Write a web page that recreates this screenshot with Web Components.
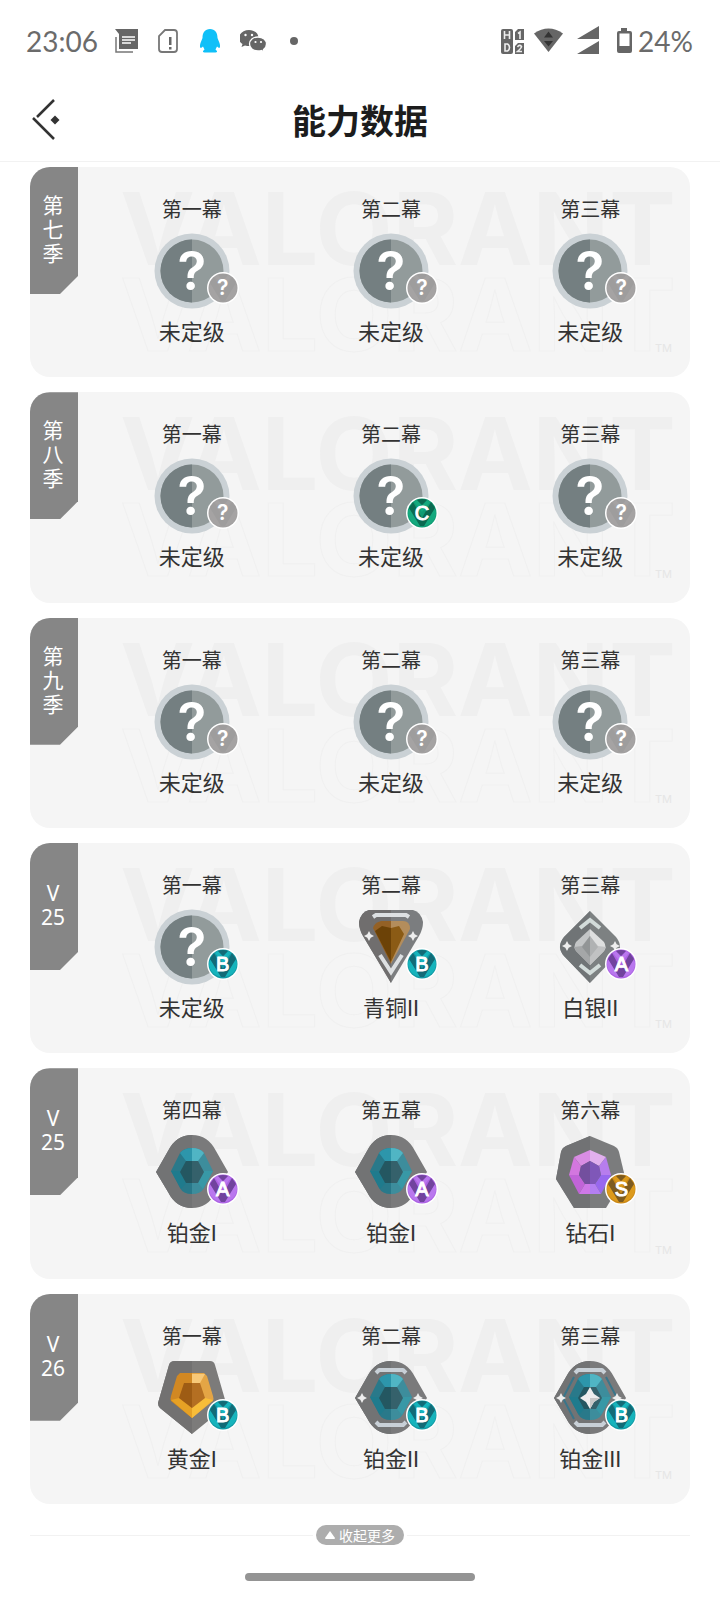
<!DOCTYPE html>
<html lang="zh-CN">
<head>
<meta charset="utf-8">
<meta name="viewport" content="width=device-width, initial-scale=1">
<title>能力数据</title>
<style>
  body { margin: 0; display: flex; flex-direction: column; min-height: 100vh; background: #fff; color: #333; font-family: Roboto, "Noto Sans CJK SC", sans-serif; }
  main { flex: 1; display: grid; grid-auto-rows: 1fr; gap: 15px; padding: 5px 30px 0; }
</style>
</head>
<body>
<status-bar time="23:06" battery="24%"></status-bar>
<page-header>能力数据</page-header>
<main>
  <season-card>
    <span slot="season">第<br>七<br>季</span>
    <act-rank act="第一幕" rank="unranked" grade="?">未定级</act-rank>
    <act-rank act="第二幕" rank="unranked" grade="?">未定级</act-rank>
    <act-rank act="第三幕" rank="unranked" grade="?">未定级</act-rank>
  </season-card>
  <season-card>
    <span slot="season">第<br>八<br>季</span>
    <act-rank act="第一幕" rank="unranked" grade="?">未定级</act-rank>
    <act-rank act="第二幕" rank="unranked" grade="C">未定级</act-rank>
    <act-rank act="第三幕" rank="unranked" grade="?">未定级</act-rank>
  </season-card>
  <season-card>
    <span slot="season">第<br>九<br>季</span>
    <act-rank act="第一幕" rank="unranked" grade="?">未定级</act-rank>
    <act-rank act="第二幕" rank="unranked" grade="?">未定级</act-rank>
    <act-rank act="第三幕" rank="unranked" grade="?">未定级</act-rank>
  </season-card>
  <season-card>
    <span slot="season">V<br>25</span>
    <act-rank act="第一幕" rank="unranked" grade="B">未定级</act-rank>
    <act-rank act="第二幕" rank="bronze2" grade="B">青铜II</act-rank>
    <act-rank act="第三幕" rank="silver2" grade="A">白银II</act-rank>
  </season-card>
  <season-card>
    <span slot="season">V<br>25</span>
    <act-rank act="第四幕" rank="platinum1" grade="A">铂金I</act-rank>
    <act-rank act="第五幕" rank="platinum1" grade="A">铂金I</act-rank>
    <act-rank act="第六幕" rank="diamond1" grade="S">钻石I</act-rank>
  </season-card>
  <season-card>
    <span slot="season">V<br>26</span>
    <act-rank act="第一幕" rank="gold1" grade="B">黄金I</act-rank>
    <act-rank act="第二幕" rank="platinum2" grade="B">铂金II</act-rank>
    <act-rank act="第三幕" rank="platinum3" grade="B">铂金III</act-rank>
  </season-card>
</main>
<collapse-toggle>收起更多</collapse-toggle>
<home-indicator></home-indicator>

<script>
class BaseElement extends HTMLElement {
  connectedCallback() {
    if (!this.shadowRoot) this.attachShadow({ mode: "open" }).innerHTML = this.render();
  }
}

customElements.define("status-bar", class extends BaseElement {
  render() {
    return `<style>
      :host { display: flex; justify-content: space-between; align-items: center; height: 82px; padding: 0 27px 0 26px; color: #6b6b6b; font: 28px/34px Lato, sans-serif; }
      .side { display: flex; align-items: center; gap: 16px; }
      .right { gap: 8px; }
      .battery { display: flex; align-items: center; }
      svg { display: block; fill: #666; }
    </style>
    <div class="side">
      <span>${this.getAttribute("time")}</span>
      <svg width="26" height="26" viewBox="0 0 26 26"><path d="M1 1H24V21H5V6Z"/><path d="M8 9H21M8 12H21M8 15H17" stroke="#fff" stroke-width="1.3"/><path d="M2 9V24H19" fill="none" stroke="#777" stroke-width="1.5"/></svg>
      <svg width="24" height="26" viewBox="0 0 24 26"><path d="M9 2H18Q21 2 21 5V21Q21 24 18 24H6Q3 24 3 21V8Z" fill="none" stroke="#777" stroke-width="1.8"/><path d="M13 9H15.500V17H13ZM13 19H15.500V21.500H13Z"/></svg>
      <svg width="28" height="26" viewBox="0 0 28 26"><path fill="#10c0f8" d="M14 1C9 1 6.500 4.500 6.500 10L4.500 15C3.500 18 4 20 5 20L7 18.500L8.500 21.500L7 23Q6.500 24.500 10 24.500H18Q21.500 24.500 21 23L19.500 21.500L21 18.500L23 20C24 20 24.500 18 23.500 15L21.500 10C21.500 4.500 19 1 14 1Z"/></svg>
      <svg width="28" height="26" viewBox="1 0 28 26"><path d="M10 2C4.500 2 0 5.500 0 10Q0 14 3.500 16L2.500 19L6 17.500Q8 18 10.500 18C16 18 19.500 14.500 19.500 10S15.500 2 10 2Z"/><path stroke="#fff" stroke-width="1.300" d="M19 9C14 9 10.500 12 10.500 16S14 23 19 23Q21 23 22.500 22.500L25.500 24L24.500 21.500Q27.500 19.500 27.500 16C27.500 12 24 9 19 9Z"/><g fill="#fff"><circle cx="6.500" cy="7" r="1.200"/><circle cx="13" cy="7" r="1.200"/><circle cx="16.500" cy="14" r="1.100"/><circle cx="22" cy="14" r="1.100"/></g></svg>
      <svg width="24" height="26" viewBox="0 0 24 26"><circle cx="10" cy="13" r="4"/></svg>
    </div>
    <div class="side right">
      <svg width="28" height="28" viewBox="0 0 28 28"><rect x="3" y="2" width="12" height="25" rx="2"/><path d="M20 2H26V13H17V5ZM20 16H26V27H17V19Z"/><path d="M6.500 4V12M11.500 4V12M6.500 8H11.500M7 17H9.500Q11.500 18 11.500 20.500T9.500 24H7ZM20 6.500L22 5V12M19.500 20Q21.500 17 23.500 19.500Q23.500 21 19.500 24.500H24" fill="none" stroke="#eee" stroke-width="1.600"/></svg>
      <svg width="32" height="28" viewBox="1 0 32 28"><path d="M1 6.500Q15.500-3.500 30 6.500L15.500 25Z"/><path fill="#333" d="M15.500 4.500L20 10.500H11ZM15.500 19.500L11 14H20Z"/></svg>
      <svg width="30" height="30" viewBox="1 1 30 30"><path d="M26 1V14H4ZM26 16V29H4Z"/></svg>
      <div class="battery">
        <svg width="26" height="28" viewBox="1 0 26 28"><path fill-rule="evenodd" d="M10 1H16V4H19Q21 4 21 6V24Q21 26 19 26H8Q6 26 6 24V6Q6 4 8 4H10ZM8.500 6.500V19H18.500V6.500Z"/></svg>
        <span>${this.getAttribute("battery")}</span>
      </div>
    </div>`;
  }
});

customElements.define("page-header", class extends BaseElement {
  render() {
    return `<style>
      :host { display: grid; grid-template-columns: 1fr auto 1fr; align-items: center; height: 79px; border-bottom: 1px solid #f2f2f2; }
      h1 { margin: 0; font-size: 34px; line-height: 48px; font-weight: 700; color: #1c1c1c; }
      button { justify-self: start; margin: 0 0 4px 30px; padding: 0; border: 0; background: none; }
      svg { display: block; }
    </style>
    <button type="button" aria-label="返回"><svg width="32" height="44" viewBox="0 0 32 44" fill="none" stroke="#333" stroke-width="2.500"><path d="M24 2L7 19M3 20L24 41"/><path fill="#333" stroke="none" d="M25 17.500L29.500 22L25 26.500L20.500 22Z"/></svg></button>
    <h1><slot></slot></h1>`;
  }
});

customElements.define("season-card", class extends BaseElement {
  render() {
    return `<style>
      :host { display: grid; grid-template-columns: 48px 1fr; position: relative; min-height: 210px; overflow: hidden; border-radius: 20px; background: #f5f5f5; }
      .tab { display: flex; align-items: center; justify-content: center; box-sizing: border-box; height: 127px; padding: 0 2px 3px 0; background: #868686; color: #fff; font: 21px/24px "Noto Sans", "Noto Sans CJK SC", sans-serif; text-align: center; clip-path: polygon(0 0, 100% 0, 100% 109px, 30px 100%, 0 100%); }
      .acts { display: grid; grid-template-columns: repeat(3, 1fr); padding-left: 14px; position: relative; }
      .mark { position: absolute; inset: 0; display: flex; flex-direction: column; align-items: center; justify-content: center; padding-left: 76px; color: #efefef; font: 700 100px/86px Inter, sans-serif; }
      .line { color: #f5f5f5; -webkit-text-stroke: 1px #f0f0f0; }
      .tm { position: absolute; right: 18px; bottom: 22px; font: 11px/14px Inter, sans-serif; color: #e6e6e6; }
    </style>
    <div class="mark" aria-hidden="true"><span>VALORANT</span><span class="line">VALORANT</span><span class="tm">TM</span></div>
    <div class="tab"><slot name="season"></slot></div>
    <div class="acts"><slot></slot></div>`;
  }
});

const sparkle = (x, y, r) => {
  const k = r / 3;
  return `<path fill="#eee" d="M${x} ${y - r}L${x + k} ${y - k}L${x + r} ${y}L${x + k} ${y + k}L${x} ${y + r}L${x - k} ${y + k}L${x - r} ${y}L${x - k} ${y - k}Z"/>`;
};
const platinumBase = `
  <path fill="#7a7a7b" d="M2 38L14 17Q22 1 38 1Q54 1 62 17L74 38L62 58Q54 74 38 74Q22 74 14 58Z"/>
  <path fill="#727374" d="M2 38L14 17Q22 1 38 1V74Q22 74 14 58Z"/>
  <path fill="#29798a" d="M17 37L26 19Q30 14 38 14V60Q29 60 26 54Z"/>
  <path fill="#3d8d9c" d="M59 37L50 19Q46 14 38 14V60Q47 60 50 54Z"/>
  <path fill="#2d96ab" d="M26 19Q30 14 38 14V27H32Z"/><path fill="#50b5c4" d="M38 14Q46 14 50 19L44 27H38Z"/>
  <path fill="#1f7b8d" d="M17 37H26L32 49L27 55Z"/><path fill="#3898a6" d="M59 37H50L44 49L49 55Z"/>
  <path fill="#245761" d="M38 27H32L26 38L32 49H38Z"/><path fill="#35616b" d="M38 27H44L50 38L44 49H38Z"/>`;
const bars = `<path fill="none" stroke="#c8d0d7" stroke-width="4" stroke-linejoin="round" d="M23 13L26 10H50L53 13M23 62L26 65H50L53 62"/>`;

const emblems = {
  unranked: `
    <circle cx="38" cy="38" r="37.500" fill="#cad1d5"/>
    <circle cx="38" cy="38" r="31.500" fill="#929b9b"/><path fill="#747f81" d="M38 6.500A31.500 31.500 0 0 0 38 69.500Z"/>
    <text x="38" y="57" text-anchor="middle" fill="#fff" font-family="Inter, sans-serif" font-weight="600" font-size="53">?</text>`,
  bronze2: `
    <path fill="#7b7d7f" d="M16 1H60Q68 3 70 13Q70 20 66 27L38 74L10 27Q6 20 6 13Q8 3 16 1Z"/>
    <path fill="#706e6e" d="M16 1H38V74L10 27Q6 20 6 13Q8 3 16 1Z"/>
    <path fill="#946126" d="M20 19Q21 14 28 12H38V55Z"/><path fill="#b38d5c" d="M38 12H50Q57 12 57 20L38 55Z"/>
    <path fill="#6c4207" d="M22 22L29 17L38 19V53Z"/><path fill="#8b5b15" d="M38 19L46 17L51 25L38 53Z"/>
    <path fill="none" stroke="#dde0e2" stroke-width="4" d="M20 8L23 6H53L56 8M27 46L38 63L49 46"/>
    ${sparkle(16, 27, 5)}${sparkle(60, 27, 5)}`,
  silver2: `
    <path fill="#7d8182" d="M38 2L64 28Q72 38 64 47L38 74L12 47Q4 38 12 28Z"/>
    <path fill="#707476" d="M38 2V74L12 47Q4 38 12 28Z"/>
    <path fill="#c3c5c6" d="M38 20L24 33Q21 38 24 42L38 56Z"/><path fill="#dedfdf" d="M38 20L52 33Q55 38 52 42L38 56Z"/>
    <path fill="#a5a7a8" d="M38 27L30 37L22 38L24 42L38 56Z"/><path fill="#c1c2c3" d="M38 27L46 37L54 38L52 42L38 56Z"/>
    <path fill="#929596" d="M30 38L38 27V48Z"/><path fill="#b0b2b3" d="M46 38L38 27V48Z"/>
    <path fill="none" stroke="#d3dcda" stroke-width="4" d="M28 19L38 11L48 19M28 56L38 64L48 56"/>
    ${sparkle(15, 37, 5)}${sparkle(63, 37, 5)}`,
  platinum1: platinumBase,
  platinum2: platinumBase + bars + sparkle(9, 38, 5) + sparkle(65, 38, 5),
  platinum3: `${platinumBase}${bars}<path fill="none" stroke="#39758a" stroke-width="2" d="M22 17L11 38L22 59M54 17L65 38L54 59"/>${sparkle(9, 38, 5)}${sparkle(65, 38, 5)}
    <path fill="#eee" d="M38 27L42 34L48 38L42 42L38 49L34 42L28 38L34 34Z"/><path fill="#c9c9c9" d="M38 38L48 38L42 42L38 49Z"/>`,
  diamond1: `
    <path fill="#7b7c7d" d="M38 2L62 12Q66 14 67 18L73 43L54 74H22L4 45L9 18Q10 14 14 12Z"/>
    <path fill="#717274" d="M38 2V74H22L4 45L9 18Q10 14 14 12Z"/>
    <path fill="#d98de4" d="M38 16L22 23L29 32L38 27Z"/><path fill="#e2b0ee" d="M38 16L54 23L47 32L38 27Z"/>
    <path fill="#d377df" d="M22 23L17 41H27L29 32Z"/><path fill="#b77ded" d="M54 23L59 41H49L47 32Z"/>
    <path fill="#c164d8" d="M17 41L27 60L33 50L27 41Z"/><path fill="#9868ee" d="M59 41L49 60L43 50L49 41Z"/>
    <path fill="#ce78e7" d="M27 60H38V50H33Z"/><path fill="#b47ff2" d="M49 60H38V50H43Z"/>
    <path fill="#734f9e" d="M38 27L29 32L27 41L33 50H38Z"/><path fill="#7f57b8" d="M38 27L47 32L49 41L43 50H38Z"/>`,
  gold1: `
    <path fill="#7c7b7a" d="M21 1H56Q60 1 61 5L72 43Q72 46 70 48L38 74L6 48Q4 46 4 43L15 5Q16 1 21 1Z"/>
    <path fill="#727171" d="M38 1V74L6 48Q4 46 4 43L15 5Q16 1 21 1Z"/>
    <path fill="#d18823" d="M26 13H38V58L17 41Q16 39 17 36L23 16Z"/><path fill="#e4a545" d="M50 13H38V58L59 41Q60 39 59 36L53 16Z"/>
    <path fill="#f7c878" d="M38 14H51L46 23H38Z"/><path fill="#e6a125" d="M17 40L25 38L38 48V58Z"/><path fill="#f7bd39" d="M59 40L51 38L38 48V58Z"/>
    <path fill="#9e5c14" d="M38 23H30L25 38L38 48Z"/><path fill="#b46f22" d="M38 23H46L51 38L38 48Z"/>`
};

const gradeColors = {
  "?": ["#a2a0a0", "#a5a3a3", "#9e9d9d"],
  A: ["#ad63e4", "#b977ee", "#71439e"],
  B: ["#1298a3", "#16b4bc", "#126b77"],
  C: ["#109b73", "#14a97e", "#0a6950"],
  S: ["#cb8917", "#dc9a1c", "#7d5b20"]
};

customElements.define("rank-emblem", class extends BaseElement {
  render() {
    return `<style>:host { display: block; width: 76px; height: 76px; } svg { display: block; }</style>
      <svg width="76" height="76" viewBox="0 0 76 76">${emblems[this.getAttribute("rank")]}</svg>`;
  }
});

customElements.define("grade-badge", class extends BaseElement {
  render() {
    const grade = this.getAttribute("grade");
    const [base, light, dark] = gradeColors[grade];
    const font = grade === "?" ? "600 21px/32px Inter" : '20px/32px "Liberation Sans"';
    return `<style>
      :host { display: grid; place-items: center; width: 32px; height: 32px; color: #fff; }
      svg, span { grid-area: 1 / 1; }
      svg { display: block; }
      span { position: relative; font: ${font}, sans-serif; -webkit-text-stroke: ${grade === "?" ? 0 : 1}px #fff; }
    </style>
    <svg width="32" height="32" viewBox="0 0 32 32" aria-hidden="true">
      <circle cx="16" cy="16" r="16" fill="#fff"/><circle cx="16" cy="16" r="14.500" fill="${base}"/>
      <path fill="${light}" d="M3 12L8 14L14 29Q2 26 2 15ZM29 12L24 14L18 29Q30 26 30 15ZM8 5L16 15L24 5L21 3L16 9L11 3Z"/>
      <path fill="${dark}" d="M3 11L7 5L16 21L25 5L29 11L18 29H14ZM11 3L16 8L21 3Q16 1 11 3Z"/>
    </svg><span>${grade}</span>`;
  }
});

customElements.define("act-rank", class extends BaseElement {
  render() {
    return `<style>
      :host { display: flex; flex-direction: column; align-items: center; padding-top: 29px; }
      .act { font-size: 20px; line-height: 28px; }
      .icon { position: relative; margin: 9px 0 8px; }
      grade-badge { position: absolute; left: 53px; top: 39px; }
      .name { font-size: 22px; line-height: 32px; }
    </style>
    <div class="act">${this.getAttribute("act")}</div>
    <div class="icon"><rank-emblem rank="${this.getAttribute("rank")}"></rank-emblem><grade-badge grade="${this.getAttribute("grade")}"></grade-badge></div>
    <div class="name"><slot></slot></div>`;
  }
});

customElements.define("collapse-toggle", class extends BaseElement {
  render() {
    return `<style>
      :host { display: flex; align-items: center; gap: 3px; padding: 21px 30px 0; }
      :host::before, :host::after { content: ""; flex: 1; height: 1px; background: #f2f2f2; }
      button { display: flex; align-items: center; justify-content: center; gap: 4px; width: 88px; height: 20px; padding: 0; border: 0; border-radius: 10px; background: #adadad; color: #fff; font: 14px/20px "Noto Sans CJK SC", sans-serif; }
    </style>
    <button type="button"><svg width="10" height="8" viewBox="0 0 10 8" fill="#fff" aria-hidden="true"><path d="M5 0L10 7Q10 8 9 8H1Q0 8 0 7Z"/></svg><span><slot></slot></span></button>`;
  }
});

customElements.define("home-indicator", class extends BaseElement {
  render() {
    return `<style>
      :host { display: flex; justify-content: center; padding: 28px 0 19px; }
      div { width: 32%; height: 8px; border-radius: 4px; background: #949494; }
    </style><div></div>`;
  }
});
</script>
</body>
</html>
